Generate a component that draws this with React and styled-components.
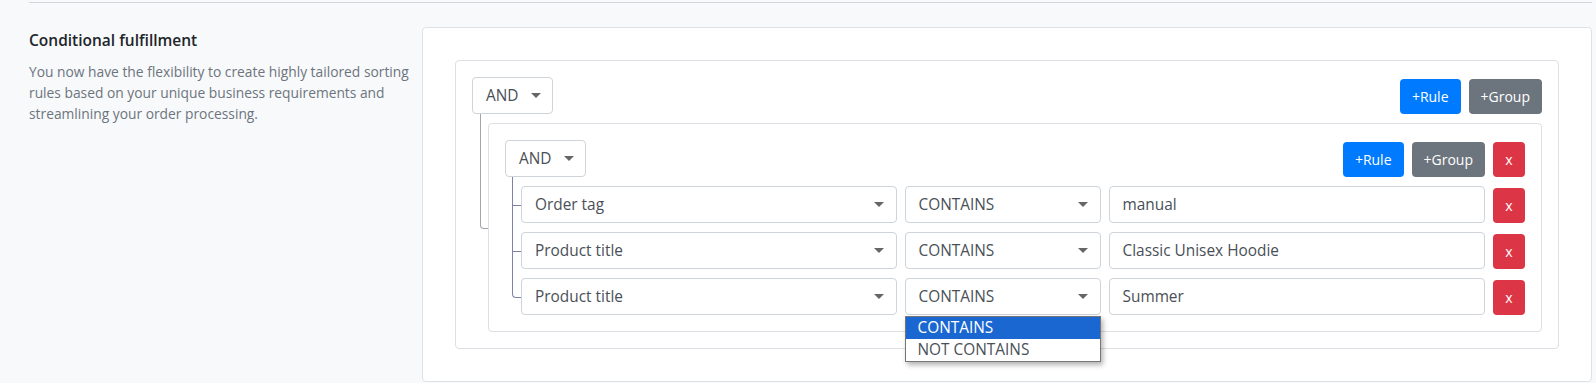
import React from "react";
import styled, { createGlobalStyle, css } from "styled-components";

const GlobalStyle = createGlobalStyle`
  body {
    margin: 0;
    background: #f8f9fb;
    font-family: "Open Sans", "Noto Sans", sans-serif;
    color: #212529;
  }
`;

const rows = [
  { field: "Order tag", op: "CONTAINS", value: "manual" },
  { field: "Product title", op: "CONTAINS", value: "Classic Unisex Hoodie" },
  { field: "Product title", op: "CONTAINS", value: "Summer", open: true },
];

const App = () => {
  return (
    <>
      <GlobalStyle />
      <Page>
        <Divider />
        <Section>
          <Intro>
            <Title>Conditional fulfillment</Title>
            <Lead>
              You now have the flexibility to create highly tailored sorting
              rules based on your unique business requirements and
              streamlining your order processing.
            </Lead>
          </Intro>
          <Panel>
            <Group>
              <GroupHeader>
                <Combinator>
                  AND <Caret />
                </Combinator>
                <Actions>
                  <Btn variant="primary">+Rule</Btn>
                  <Btn variant="secondary">+Group</Btn>
                </Actions>
              </GroupHeader>
              <GroupBody>
                <Branch tone="outer">
                  <Group>
                    <GroupHeader>
                      <Combinator>
                        AND <Caret />
                      </Combinator>
                      <Actions>
                        <Btn variant="primary">+Rule</Btn>
                        <Btn variant="secondary">+Group</Btn>
                        <Btn variant="danger">x</Btn>
                      </Actions>
                    </GroupHeader>
                    <GroupBody>
                      {rows.map((r, i) => (
                        <Branch tone="inner" key={i}>
                          <Rule>
                            <Select grow>
                              {r.field}
                              <Caret />
                            </Select>
                            <OpWrap>
                              <Select>
                                {r.op}
                                <Caret />
                              </Select>
                              {r.open && (
                                <Menu>
                                  <MenuItem active>CONTAINS</MenuItem>
                                  <MenuItem>NOT CONTAINS</MenuItem>
                                </Menu>
                              )}
                            </OpWrap>
                            <Input>{r.value}</Input>
                            <Btn variant="danger">x</Btn>
                          </Rule>
                        </Branch>
                      ))}
                    </GroupBody>
                  </Group>
                </Branch>
              </GroupBody>
            </Group>
          </Panel>
        </Section>
      </Page>
    </>
  );
};

export default App;

const Page = styled.div`
  padding: 2px 4px 0 29px;
`;

const Divider = styled.div`
  border-top: 1px solid #d3d6dc;
`;

const Section = styled.div`
  display: flex;
  margin-top: 24px;
`;

const Intro = styled.div`
  width: 393px;
  flex-shrink: 0;
  padding-top: 2px;
`;

const Title = styled.h3`
  margin: 0 0 10px;
  font-size: 15.5px;
  font-weight: 600;
  line-height: 22px;
  color: #212529;
`;

const Lead = styled.p`
  margin: 0;
  width: 388px;
  font-size: 13.8px;
  line-height: 21px;
  color: #6c757d;
`;

const Panel = styled.div`
  flex: 1;
  background: #fff;
  border: 1px solid #dee2e6;
  border-radius: 4px;
  padding: 32px;
`;

const Group = styled.div`
  background: #fff;
  border: 1px solid #dcdfe3;
  border-radius: 4px;
  padding: 16px;
`;

const GroupHeader = styled.div`
  display: flex;
  align-items: flex-end;
  justify-content: space-between;
`;

const Actions = styled.div`
  display: flex;
  gap: 8px;
`;

const GroupBody = styled.div`
  display: flex;
  flex-direction: column;
  gap: 9px;
  margin: 9px 0 0 16px;
`;

const Branch = styled.div`
  position: relative;
  --line: ${(p) => (p.tone === "inner" ? "#7f82a8" : "#a3a5ab")};

  &::before {
    content: "";
    position: absolute;
    left: ${(p) => (p.tone === "inner" ? "-9px" : "-8px")};
    top: -9px;
    width: ${(p) => (p.tone === "inner" ? "8px" : "7px")};
    height: calc(50% + 9px);
    border-left: 1px solid var(--line);
    border-bottom: 1px solid var(--line);
  }
  &:last-child::before {
    border-bottom-left-radius: 4px;
  }
  &:not(:last-child)::after {
    content: "";
    position: absolute;
    left: ${(p) => (p.tone === "inner" ? "-9px" : "-8px")};
    top: 50%;
    bottom: 0;
    border-left: 1px solid var(--line);
  }
`;

const Caret = styled.span`
  width: 0;
  height: 0;
  border-left: 5px solid transparent;
  border-right: 5px solid transparent;
  border-top: 5px solid #666;
`;

const Combinator = styled.div`
  display: flex;
  align-items: center;
  gap: 12px;
  height: 37px;
  box-sizing: border-box;
  padding: 0 11px 0 13px;
  border: 1px solid #ced4da;
  border-radius: 4px;
  font-size: 15.4px;
  color: #495057;
`;

const Rule = styled.div`
  display: flex;
  align-items: flex-end;
  gap: 8px;
`;

const fieldBox = css`
  display: flex;
  align-items: center;
  height: 37px;
  box-sizing: border-box;
  border: 1px solid #ced4da;
  border-radius: 4px;
  background: #fff;
  font-size: 15.4px;
  color: #495057;
`;

const Select = styled.div`
  ${fieldBox}
  justify-content: space-between;
  padding: 0 12px 0 13px;
  ${(p) => (p.grow ? "flex: 1;" : "width: 196px;")}
`;

const OpWrap = styled.div`
  position: relative;
`;

const Input = styled.div`
  ${fieldBox}
  flex: 1;
  padding: 0 13px;
`;

const Menu = styled.div`
  position: absolute;
  top: calc(100% + 1px);
  left: 0;
  right: 0;
  z-index: 2;
  background: #fff;
  border: 1px solid #767676;
  box-shadow: 2px 3px 5px rgba(0, 0, 0, 0.3);
`;

const MenuItem = styled.div`
  height: 22px;
  line-height: 22px;
  padding-left: 12px;
  font-size: 15.4px;
  color: ${(p) => (p.active ? "#fff" : "#495057")};
  background: ${(p) => (p.active ? "#1a67d2" : "transparent")};
`;

const btnColors = {
  primary: "#007bff",
  secondary: "#6c757d",
  danger: "#dc3545",
};

const Btn = styled.button`
  height: 35px;
  min-width: 32px;
  padding: 0 12px;
  border: none;
  border-radius: 4px;
  background: ${(p) => btnColors[p.variant]};
  color: #fff;
  font-family: inherit;
  font-size: 14px;
  cursor: pointer;
`;
